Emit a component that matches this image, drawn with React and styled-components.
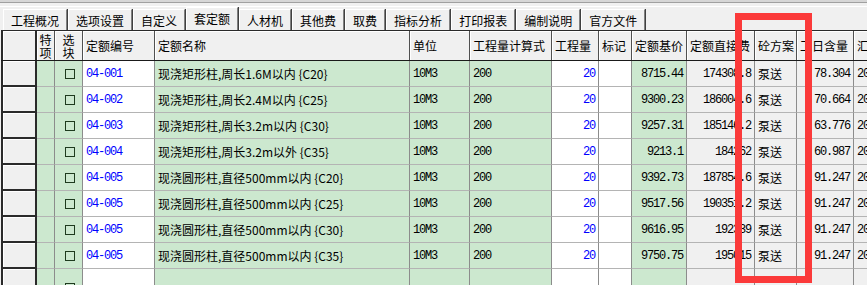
import styled, { createGlobalStyle } from "styled-components";

const GlobalStyle = createGlobalStyle`
  html, body {
    margin: 0;
    padding: 0;
    background: #f0f0f0;
    overflow: hidden;
  }
  body {
    font-family: "Noto Sans CJK SC", "Liberation Sans", sans-serif;
    font-size: 12px;
    color: #000;
  }
`;

const GREEN = "#cce8cf";
const GRAY = "#f0f0f0";
const WHITE = "#ffffff";

const COLS = "36px 18px 28px 72px 255px 60px 82px 47px 33px 55px 68px 42px 57px 60px";

const Window = styled.div`
  position: relative;
  width: 867px;
  height: 285px;
  overflow: hidden;
  background: #f0f0f0;
`;

const TopEdge = styled.div`
  height: 7px;
  box-sizing: border-box;
  border-top: 2px solid #d6d6d6;
  border-bottom: 1px solid #ffffff;
  background: #f0f0f0;
  box-shadow: inset 0 1px 0 #a0a0a0;
`;

const TabStrip = styled.div`
  display: flex;
  align-items: flex-end;
  height: 23px;
  padding-left: 3px;
`;

const Tab = styled.div`
  height: ${(p) => (p.$active ? "23px" : "21px")};
  line-height: ${(p) => (p.$active ? "22px" : "21px")};
  padding: 0 7px;
  box-sizing: border-box;
  border-left: 1px solid #ffffff;
  border-top: 1px solid #ffffff;
  border-right: 1px solid #808080;
  box-shadow: 1px 0 0 #404040;
  margin-right: 1px;
  white-space: nowrap;
  background: #f0f0f0;
  position: relative;
  z-index: ${(p) => (p.$active ? 1 : 0)};
`;

const Grid = styled.div`
  margin-left: 1px;
  width: 912px;
`;

const Row = styled.div`
  display: grid;
  grid-template-columns: ${COLS};
  height: ${(p) => (p.$head ? "31px" : "26px")};
`;

const HeadRow = styled(Row)`
  border-top: 1px solid #2a2a2a;
  border-bottom: 1px solid #1a1a1a;
  box-sizing: border-box;
`;

const HeadCell = styled.div`
  box-sizing: border-box;
  background: #f0f0f0;
  border-right: 1px solid #505050;
  box-shadow: inset 1px 1px 0 #ffffff;
  display: flex;
  align-items: center;
  justify-content: ${(p) => (p.$center ? "center" : "flex-start")};
  text-align: center;
  padding: 0 ${(p) => (p.$center ? "0" : "3px")};
  line-height: 13px;
  white-space: ${(p) => (p.$wrap ? "pre-line" : "nowrap")};
  overflow: hidden;
  &:first-child {
    border-left: 2px solid #2a2a2a;
    border-right: 2px solid #2a2a2a;
  }
`;

const RowHead = styled.div`
  box-sizing: border-box;
  background: #f0f0f0;
  border-left: 2px solid #2a2a2a;
  border-right: 2px solid #2a2a2a;
  border-bottom: 2px solid #2a2a2a;
  box-shadow: inset 1px 1px 0 #ffffff;
`;

const Cell = styled.div`
  box-sizing: border-box;
  background: ${(p) => p.$bg};
  color: ${(p) => (p.$blue ? "#0000ff" : "#000")};
  border-right: 1px solid #8c8c8c;
  border-bottom: 1px solid #b4b4b4;
  display: flex;
  align-items: center;
  justify-content: ${(p) =>
    p.$align === "right" ? "flex-end" : p.$align === "center" ? "center" : "flex-start"};
  padding: 0 ${(p) => (p.$align === "right" ? "3px" : "0")} 0 ${(p) => (p.$align === "right" ? "0" : "3px")};
  white-space: nowrap;
  overflow: hidden;
`;

const Num = styled.span`
  font-family: "Liberation Mono", "DejaVu Sans Mono", monospace;
  font-size: 12px;
  letter-spacing: -1.2px;
`;

const Check = styled.span`
  width: 10px;
  height: 10px;
  box-sizing: border-box;
  border: 1px solid #1e3a1e;
  margin-top: ${(p) => (p.$low ? "12px" : "0")};
`;

const Marker = styled.div`
  position: absolute;
  left: 735px;
  top: 13px;
  width: 77px;
  height: 270px;
  box-sizing: border-box;
  border: 7px solid #fb3a3a;
  pointer-events: none;
`;

const tabs = [
  "工程概况",
  "选项设置",
  "自定义",
  "套定额",
  "人材机",
  "其他费",
  "取费",
  "指标分析",
  "打印报表",
  "编制说明",
  "官方文件",
];

const rows = [
  ["04-001", "现浇矩形柱,周长1.6M以内 {C20}", "8715.44", "174308.8", "78.304"],
  ["04-002", "现浇矩形柱,周长2.4M以内 {C25}", "9300.23", "186004.6", "70.664"],
  ["04-003", "现浇矩形柱,周长3.2m以内 {C30}", "9257.31", "185146.2", "63.776"],
  ["04-004", "现浇矩形柱,周长3.2m以外 {C35}", "9213.1", "184262", "60.987"],
  ["04-005", "现浇圆形柱,直径500mm以内 {C20}", "9392.73", "187854.6", "91.247"],
  ["04-005", "现浇圆形柱,直径500mm以内 {C25}", "9517.56", "190351.2", "91.247"],
  ["04-005", "现浇圆形柱,直径500mm以内 {C30}", "9616.95", "192339", "91.247"],
  ["04-005", "现浇圆形柱,直径500mm以内 {C35}", "9750.75", "195015", "91.247"],
];

export default function App() {
  return (
    <Window>
      <GlobalStyle />
      <TopEdge />
      <TabStrip>
        {tabs.map((t) => (
          <Tab key={t} $active={t === "套定额"}>
            {t}
          </Tab>
        ))}
      </TabStrip>
      <Grid>
        <HeadRow $head>
          <HeadCell />
          <HeadCell $center $wrap>{"特\n项"}</HeadCell>
          <HeadCell $center $wrap>{"选\n块"}</HeadCell>
          <HeadCell>定额编号</HeadCell>
          <HeadCell>定额名称</HeadCell>
          <HeadCell>单位</HeadCell>
          <HeadCell>工程量计算式</HeadCell>
          <HeadCell>工程量</HeadCell>
          <HeadCell>标记</HeadCell>
          <HeadCell>定额基价</HeadCell>
          <HeadCell>定额直接费</HeadCell>
          <HeadCell>砼方案</HeadCell>
          <HeadCell>工日含量</HeadCell>
          <HeadCell>汇</HeadCell>
        </HeadRow>
        {rows.map((r, i) => (
          <Row key={i}>
            <RowHead />
            <Cell $bg={GREEN} />
            <Cell $bg={GREEN} $align="center">
              <Check />
            </Cell>
            <Cell $bg={WHITE} $blue>
              <Num>{r[0]}</Num>
            </Cell>
            <Cell $bg={GREEN}>{r[1]}</Cell>
            <Cell $bg={GREEN}>
              <Num>10M3</Num>
            </Cell>
            <Cell $bg={GREEN}>
              <Num>200</Num>
            </Cell>
            <Cell $bg={WHITE} $blue $align="right">
              <Num>20</Num>
            </Cell>
            <Cell $bg={WHITE} />
            <Cell $bg={GREEN} $align="right">
              <Num>{r[2]}</Num>
            </Cell>
            <Cell $bg={GRAY} $align="right">
              <Num>{r[3]}</Num>
            </Cell>
            <Cell $bg={GRAY}>泵送</Cell>
            <Cell $bg={GRAY} $align="right">
              <Num>{r[4]}</Num>
            </Cell>
            <Cell $bg={GRAY}>
              <Num>20</Num>
            </Cell>
          </Row>
        ))}
        <Row>
          <RowHead />
          <Cell $bg={GREEN} />
          <Cell $bg={GREEN} $align="center">
            <Check $low />
          </Cell>
          <Cell $bg={WHITE} />
          <Cell $bg={GREEN} />
          <Cell $bg={GREEN} />
          <Cell $bg={GREEN} />
          <Cell $bg={WHITE} />
          <Cell $bg={WHITE} />
          <Cell $bg={GREEN} />
          <Cell $bg={GRAY} />
          <Cell $bg={GRAY} />
          <Cell $bg={GRAY} />
          <Cell $bg={GRAY} />
        </Row>
      </Grid>
      <Marker />
    </Window>
  );
}
